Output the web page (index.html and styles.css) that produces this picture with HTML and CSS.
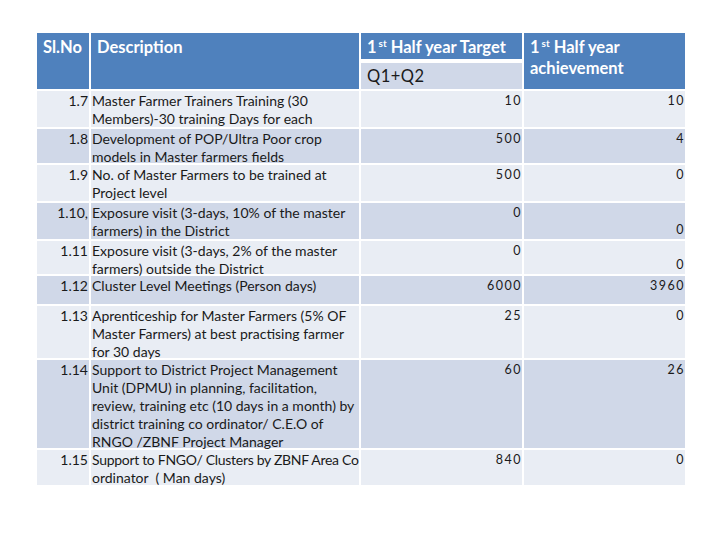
FILE: index.html
```html
<!DOCTYPE html>
<html>
<head>
<meta charset="utf-8">
<link rel="stylesheet" href="styles.css">
</head>
<body>
<div class="page">
  <div class="grid">
    <div class="hd">Sl.No</div>
    <div class="hd">Description</div>
    <div class="hd one">1<sup>st</sup> Half year Target</div>
    <div class="hd">1<sup>st</sup> Half year achievement</div>
    <div class="sub">Q1+Q2</div>

    <div class="row lt"><div class="sl">1.7</div><div class="ds">Master Farmer Trainers Training (30<br>Members)-30 training Days for each</div><div class="n">10</div><div class="n">10</div></div>
    <div class="row dk"><div class="sl">1.8</div><div class="ds">Development of POP/Ultra Poor crop<br>models in Master farmers fields</div><div class="n">500</div><div class="n">4</div></div>
    <div class="row lt"><div class="sl">1.9</div><div class="ds">No. of Master Farmers to be trained at<br>Project level</div><div class="n">500</div><div class="n">0</div></div>
    <div class="row dk"><div class="sl">1.10,</div><div class="ds">Exposure visit (3-days, 10% of the master<br>farmers) in the District</div><div class="n">0</div><div class="n bot">0</div></div>
    <div class="row lt"><div class="sl">1.11</div><div class="ds">Exposure visit (3-days, 2% of the master<br>farmers) outside the District</div><div class="n">0</div><div class="n bot">0</div></div>
    <div class="row dk"><div class="sl">1.12</div><div class="ds">Cluster Level Meetings (Person days)</div><div class="n">6000</div><div class="n">3960</div></div>
    <div class="row lt"><div class="sl">1.13</div><div class="ds">Aprenticeship for Master Farmers (5% OF<br>Master Farmers) at best practising farmer<br>for 30 days</div><div class="n">25</div><div class="n">0</div></div>
    <div class="row dk"><div class="sl">1.14</div><div class="ds">Support to District Project Management<br>Unit (DPMU) in planning, facilitation,<br>review, training etc (10 days in a month) by<br>district training co ordinator/ C.E.O of<br>RNGO /ZBNF Project Manager</div><div class="n">60</div><div class="n">26</div></div>
    <div class="row lt"><div class="sl">1.15</div><div class="ds"><span class="fit">Support to FNGO/ Clusters by ZBNF Area Co</span><br>ordinator &nbsp;( Man days)</div><div class="n">840</div><div class="n">0</div></div>
  </div>
</div>
</body>
</html>
```
FILE: styles.css
```css
html, body {
  margin: 0;
  padding: 0;
  background: #ffffff;
}
.page {
  padding: 33px 0 0 37px;
}
.grid {
  display: grid;
  grid-template-columns: 52px 268px 161px 161px;
  grid-template-rows: 26px 28px 36px 34px 36px 36px 33px 28px 52px 88px 35px;
  column-gap: 2px;
  row-gap: 2px;
  width: 650px;
  font-family: "Lato", "Open Sans", sans-serif;
  color: #1a1a1a;
}
.hd {
  grid-row: span 2;
  background: #4f81bd;
  color: #ffffff;
  font-weight: 700;
  font-size: 16.5px;
  line-height: 21px;
  padding: 4px 6px 0 6px;
}
.hd.one {
  grid-row: span 1;
}
.hd sup {
  font-size: 10px;
  line-height: 0;
  vertical-align: 6px;
  margin-left: 2px;
}
.sub {
  background: #d0d8e8;
  font-size: 16.5px;
  letter-spacing: 0.5px;
  line-height: 20px;
  padding: 3px 6px 0 6px;
  margin-top: 2px;
}
.row {
  display: contents;
}
.row > div {
  font-size: 14px;
  line-height: 18px;
  padding-top: 1px;
}
.lt > div { background: #e9edf4; }
.dk > div { background: #d0d8e8; }
.sl {
  text-align: right;
  white-space: nowrap;
  padding-right: 1px;
}
.ds {
  padding-left: 1px;
  white-space: nowrap;
}
.fit {
  letter-spacing: -0.3px;
}
.row > .n {
  text-align: right;
  font-size: 12.5px;
  letter-spacing: 1.5px;
}
.row > .n.bot {
  display: flex;
  align-items: flex-end;
  justify-content: flex-end;
}
```
